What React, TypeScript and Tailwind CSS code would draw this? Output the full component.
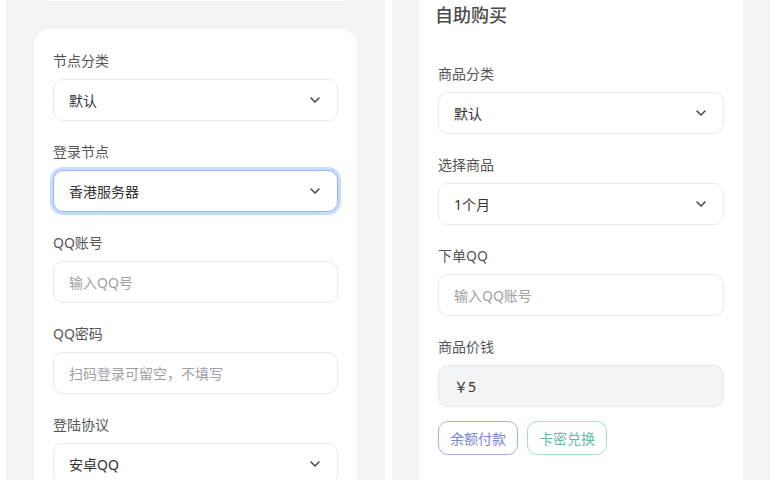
import { ChevronDown } from 'lucide-react';

const font = 'font-["Noto_Sans","Noto_Sans_CJK_SC",sans-serif]';

type FieldProps = {
  label: string;
  value?: string;
  placeholder?: string;
  select?: boolean;
  focused?: boolean;
  disabled?: boolean;
};

function Field({ label, value, placeholder, select, focused, disabled }: FieldProps) {
  const box = focused
    ? 'border-[#8db8f5] ring-[3px] ring-[#c9dcfb]'
    : 'border-[#e8e9ec]';
  return (
    <div className="flex flex-col">
      <div className="text-[14px] leading-[20px] text-[#555] mb-[8px]">{label}</div>
      <div
        className={`h-[42px] rounded-[10px] border flex items-center justify-between pl-[15px] pr-[14px] ${box} ${disabled ? 'bg-[#f3f4f6]' : 'bg-white'}`}
      >
        {value ? (
          <span className="text-[14px] text-[#333]">{value}</span>
        ) : (
          <span className="text-[14px] text-[#a0a0a6]">{placeholder}</span>
        )}
        {select && <ChevronDown className="w-[16px] h-[16px] text-[#444]" strokeWidth={2.2} />}
      </div>
    </div>
  );
}

export default function App() {
  return (
    <div className={`${font} w-[776px] h-[480px] bg-white flex gap-[7px] px-[6px] overflow-hidden`}>
      <div className="w-[379px] h-full bg-[#f2f3f5] px-[28px] flex flex-col gap-[28px] overflow-hidden">
        <div className="h-[100px] -mt-[99px] bg-white rounded-2xl shrink-0" />
        <div className="bg-white rounded-2xl px-[19px] pt-[22px] pb-[24px] flex flex-col gap-[21px] shrink-0">
          <Field label="节点分类" value="默认" select />
          <Field label="登录节点" value="香港服务器" select focused />
          <Field label="QQ账号" placeholder="输入QQ号" />
          <Field label="QQ密码" placeholder="扫码登录可留空，不填写" />
          <Field label="登陆协议" value="安卓QQ" select />
        </div>
      </div>

      <div className="w-[378px] h-full bg-[#f2f3f5] px-[27px] overflow-hidden">
        <div className="-mt-[15px] bg-white rounded-2xl px-[19px] pt-[16px] pb-[48px]">
          <h2 className="-ml-[3px] text-[18px] leading-[28px] font-medium text-[#4a4a4a] mb-[35px]">自助购买</h2>
          <div className="flex flex-col gap-[21px]">
            <Field label="商品分类" value="默认" select />
            <Field label="选择商品" value="1个月" select />
            <Field label="下单QQ" placeholder="输入QQ账号" />
            <Field label="商品价钱" value="￥5" disabled />
          </div>
          <div className="flex gap-[9px] mt-[14px]">
            <button className="h-[34px] w-[80px] rounded-[10px] border border-[#a9adec] text-[14px] text-[#7c83dc] bg-white">
              余额付款
            </button>
            <button className="h-[34px] w-[80px] rounded-[10px] border border-[#a3dfcf] text-[14px] text-[#5cbfa6] bg-white">
              卡密兑换
            </button>
          </div>
        </div>
      </div>
    </div>
  );
}
